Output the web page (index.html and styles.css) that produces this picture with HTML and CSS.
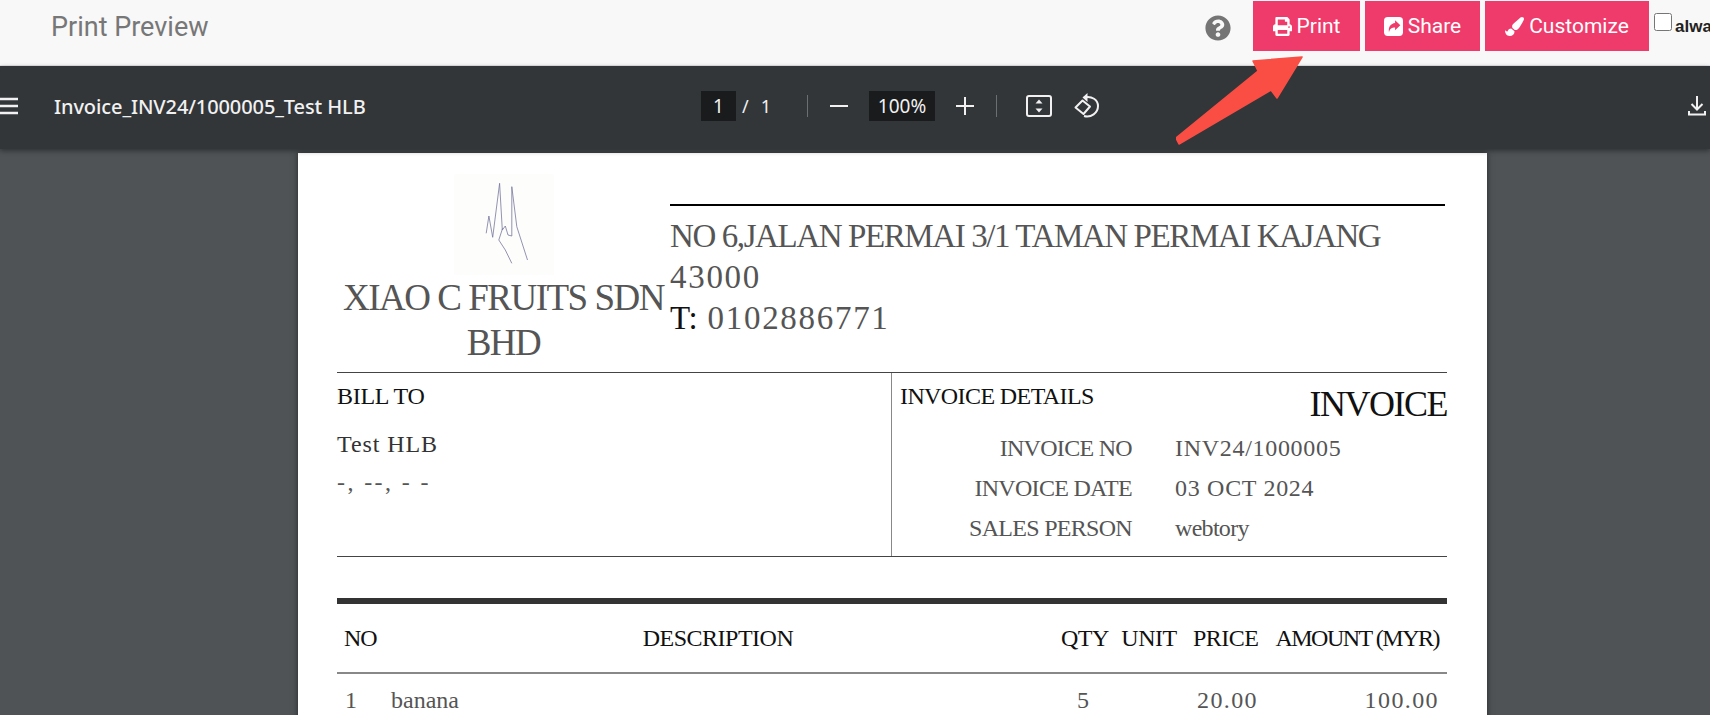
FILE: index.html
```html
<!DOCTYPE html>
<html lang="en">
<head>
    <meta charset="UTF-8">
    <title>Print Preview</title>
    <link rel="stylesheet" href="styles.css">
</head>
<body>
    <header class="topbar">
        <h1 class="topbar-title">Print Preview</h1>
        <svg class="help-icon" viewBox="0 0 512 512"><path d="M504 256c0 136.997-111.043 248-248 248S8 392.997 8 256C8 119.083 119.043 8 256 8s248 111.083 248 248zM262.655 90c-54.497 0-89.255 22.957-116.549 63.758-3.536 5.286-2.353 12.415 2.715 16.258l34.699 26.31c5.205 3.947 12.621 3.008 16.665-2.122 17.864-22.658 30.113-35.797 57.303-35.797 20.429 0 45.698 13.148 45.698 32.958 0 14.976-12.363 22.667-32.534 33.976C247.128 238.528 216 254.941 216 296v4c0 6.627 5.373 12 12 12h56c6.627 0 12-5.373 12-12v-1.333c0-28.462 83.186-29.647 83.186-106.667 0-58.002-60.165-102-116.531-102zM256 338c-25.365 0-46 20.635-46 46 0 25.364 20.635 46 46 46s46-20.636 46-46c0-25.365-20.635-46-46-46z"/></svg>
        <button class="btn btn-print">
            <svg class="btn-icon" viewBox="0 0 512 512"><path d="M448 192V77.25c0-8.49-3.37-16.62-9.37-22.63L393.37 9.37c-6-6-14.14-9.37-22.63-9.37H96C78.33 0 64 14.33 64 32v160c-35.35 0-64 28.65-64 64v112c0 8.84 7.16 16 16 16h48v96c0 17.67 14.33 32 32 32h320c17.67 0 32-14.33 32-32v-96h48c8.84 0 16-7.16 16-16V256c0-35.35-28.65-64-64-64zm-64 256H128v-96h256v96zm0-224H128V64h192v48c0 8.84 7.16 16 16 16h48v96zm48 72c-13.25 0-24-10.75-24-24 0-13.26 10.75-24 24-24s24 10.74 24 24c0 13.25-10.75 24-24 24z"/></svg>
            Print
        </button>
        <button class="btn btn-share">
            <svg class="btn-icon" viewBox="0 0 18 18"><rect width="18" height="18" rx="3.5" fill="#fff"/><path d="M10.5 3l5 4.800-5 4.800V10c-3 0-5 1-5.800 4.500C3.800 9.500 6.500 6.300 10.500 5.800z" fill="#ef3b6c"/></svg>
            Share
        </button>
        <button class="btn btn-customize">
            <svg class="btn-icon" viewBox="0 0 512 512"><path d="M167.02 309.34c-40.12 2.58-76.53 17.86-97.19 72.3-2.35 6.21-8 9.98-14.59 9.98-11.11 0-45.46-27.67-55.25-34.35C0 439.62 37.93 512 128 512c75.86 0 128-43.77 128-120.19 0-3.11-.65-6.08-.97-9.13l-88.01-73.34zM457.89 0c-15.16 0-29.37 6.71-40.21 16.45C213.27 199.05 192 203.34 192 257.09c0 13.7 3.25 26.76 8.73 38.7l63.82 53.18c7.21 1.8 14.64 3.03 22.39 3.03 62.11 0 98.11-45.47 211.16-256.46 7.38-14.35 13.9-29.85 13.9-45.99C512 20.64 486 0 457.89 0z"/></svg>
            Customize
        </button>
        <label class="always"><input type="checkbox" class="always-box"><span class="always-text">always</span></label>
    </header>

    <div class="toolbar">
        <div class="toolbar-left">
            <svg class="menu-icon" viewBox="0 0 18 18"><path d="M-2 2h20M-2 9h20M-2 16h20" stroke="#f1f1f1" stroke-width="2.400" fill="none"/></svg>
            <span class="doc-title">Invoice_INV24/1000005_Test HLB</span>
        </div>
        <div class="toolbar-center">
            <span class="num-box page-box">1</span>
            <span class="page-sep">/</span>
            <span class="page-total">1</span>
            <span class="divider divider-first"></span>
            <svg class="tool-icon zoom-minus" viewBox="0 0 18 18"><path d="M0 9h18" stroke="#f1f1f1" stroke-width="2"/></svg>
            <span class="num-box zoom-box">100%</span>
            <svg class="tool-icon zoom-plus" viewBox="0 0 18 18"><path d="M0 9h18M9 0v18" stroke="#f1f1f1" stroke-width="2"/></svg>
            <span class="divider divider-second"></span>
            <svg class="fit-icon" viewBox="0 0 26 22"><rect x="1" y="1" width="24" height="20" rx="2" fill="none" stroke="#f1f1f1" stroke-width="2"/><path d="M13 4.500l3.500 4h-7zM13 17.500l3.500-4h-7z" fill="#f1f1f1"/></svg>
            <svg class="rotate-icon" viewBox="0 0 27 26"><path d="M9.500 7.500l7.500 6-6.500 7.500-8-6.500z" fill="none" stroke="#f1f1f1" stroke-width="2" stroke-linejoin="round"/><path d="M11 4.500c8-2 14 2.500 14 8.500 0 7-7 12-14 10" fill="none" stroke="#f1f1f1" stroke-width="2"/><path d="M14.500 0v9L9.500 4.500z" fill="#f1f1f1"/></svg>
        </div>
        <svg class="download-icon" viewBox="0 0 18 20"><path d="M9 0v13M3.500 8l5.500 5.500L14.500 8M1 15v3.500h16V15" fill="none" stroke="#f1f1f1" stroke-width="2"/></svg>
    </div>

    <main class="viewer">
        <div class="sheet">
            <div class="sheet-head">
                <div class="company">
                    <svg class="company-logo" viewBox="0 0 100 101">
                        <rect width="100" height="101" fill="#fdfdfb"/>
                        <path d="M32.200 59.300L34.900 42L38.700 63.300L45.600 9.300L48.300 56L51.300 52L54 61L57.800 62L57.800 12.700L62.800 52.700L73.500 86" fill="none" stroke="#77779f" stroke-width=".8"/>
                        <path d="M48.600 54.300L44.800 66L51.300 76L57.800 89.300" fill="none" stroke="#77779f" stroke-width=".8"/>
                    </svg>
                    <div class="company-name">XIAO C FRUITS SDN BHD</div>
                </div>
                <div class="address">
                    <div>NO 6,JALAN PERMAI 3/1 TAMAN PERMAI KAJANG <span class="address-digits">43000</span></div>
                    <div><span class="address-label">T:</span> <span class="address-digits">0102886771</span></div>
                </div>
            </div>

            <div class="info">
                <div class="bill">
                    <div class="info-heading">BILL TO</div>
                    <div class="bill-name">Test HLB</div>
                    <div class="bill-address">-, --, - -</div>
                </div>
                <div class="details">
                    <div class="details-head">
                        <div class="info-heading">INVOICE DETAILS</div>
                        <div class="doc-type">INVOICE</div>
                    </div>
                    <div class="details-grid">
                        <div class="details-label">INVOICE NO</div><div class="details-value">INV24/1000005</div>
                        <div class="details-label">INVOICE DATE</div><div class="details-value">03 OCT 2024</div>
                        <div class="details-label">SALES PERSON</div><div class="details-name">webtory</div>
                    </div>
                </div>
            </div>

            <table class="items">
                <colgroup>
                    <col class="col-no"><col class="col-desc"><col class="col-qty"><col class="col-unit"><col class="col-price"><col class="col-amount">
                </colgroup>
                <thead>
                    <tr>
                        <th class="text-left no-head">NO</th>
                        <th>DESCRIPTION</th>
                        <th>QTY</th>
                        <th>UNIT</th>
                        <th class="text-right">PRICE</th>
                        <th class="text-right amount-head">AMOUNT (MYR)</th>
                    </tr>
                </thead>
                <tbody>
                    <tr>
                        <td class="text-left">1</td>
                        <td class="text-left">banana</td>
                        <td>5</td>
                        <td></td>
                        <td class="text-right money">20.00</td>
                        <td class="text-right money">100.00</td>
                    </tr>
                </tbody>
            </table>
        </div>
    </main>

    <svg class="arrow" viewBox="0 0 130 90"><path d="M126 1L77 5L82 15L0 82L3 88L95 34L101 42z" fill="#fa4e45" stroke="#fa4e45" stroke-width="1.500" stroke-linejoin="round"/></svg>
</body>
</html>
```

FILE: styles.css
```css
html, body {
    margin: 0;
    height: 100%;
    overflow: hidden;
}
body {
    position: relative;
    display: flex;
    flex-direction: column;
    font-family: "Roboto", sans-serif;
}

/* top bar */
.topbar {
    display: flex;
    align-items: flex-start;
    flex: none;
    height: 66px;
    box-sizing: border-box;
    padding-top: 1px;
    background-color: #f8f8f8;
    border-bottom: 1px solid #e4e4e4;
    overflow: hidden;
}
.topbar-title {
    margin: 10px auto 0 51px;
    font-size: 27px;
    line-height: 32px;
    font-weight: 400;
    color: #777;
}
.help-icon {
    width: 26px;
    height: 26px;
    margin: 14px 22px 0 0;
    fill: #757575;
}
.btn {
    display: flex;
    align-items: center;
    justify-content: center;
    gap: 5px;
    height: 50px;
    margin-right: 5px;
    padding: 0;
    border: none;
    background-color: #ef3b6c;
    color: #fff;
    font-family: "Roboto", sans-serif;
    font-size: 21px;
}
.btn-icon {
    width: 19px;
    height: 19px;
    fill: #fff;
}
.btn-print { width: 107px; }
.btn-share { width: 115px; }
.btn-customize { width: 164px; }
.always {
    display: flex;
    align-items: flex-start;
    width: 56px;
    margin-top: 12px;
    font-family: "Liberation Sans", Arial, sans-serif;
    font-size: 17px;
    font-weight: 700;
    color: #222;
    white-space: nowrap;
}
.always-box {
    flex: none;
    width: 18px;
    height: 18px;
    margin: 0 3px 0 0;
}
.always-text { margin-top: 4px; }

/* pdf toolbar */
.toolbar {
    display: flex;
    align-items: center;
    flex: none;
    height: 83px;
    box-sizing: border-box;
    padding-bottom: 3px;
    background-color: #323639;
    box-shadow: 0 2px 5px rgba(0, 0, 0, 0.4);
    color: #f1f1f1;
    position: relative;
}
.toolbar-left {
    display: flex;
    align-items: center;
    width: 701px;
}
.menu-icon {
    width: 18px;
    height: 18px;
}
.doc-title {
    margin-left: 36px;
    font-family: "Noto Sans", sans-serif;
    font-size: 20px;
    font-weight: 500;
    letter-spacing: -0.1px;
}
.toolbar-center {
    display: flex;
    align-items: center;
}
.num-box {
    height: 30px;
    line-height: 30px;
    text-align: center;
    background-color: #191b1c;
    font-family: "Noto Sans", sans-serif;
    font-size: 19px;
}
.page-box { width: 35px; }
.zoom-box { width: 66px; }
.page-sep {
    margin-left: 6px;
    font-family: "Noto Sans", sans-serif;
    font-size: 18px;
}
.page-total {
    margin-left: 12px;
    font-family: "Noto Sans", sans-serif;
    font-size: 18px;
}
.divider {
    width: 1px;
    height: 22px;
    background-color: #6b6f72;
}
.divider-first { margin: 0 22px 0 36px; }
.divider-second { margin: 0 29px 0 22px; }
.tool-icon {
    width: 18px;
    height: 18px;
}
.zoom-minus { margin-right: 21px; }
.zoom-plus { margin-left: 21px; }
.fit-icon {
    width: 26px;
    height: 22px;
}
.rotate-icon {
    width: 27px;
    height: 26px;
    margin-left: 21px;
}
.download-icon {
    width: 18px;
    height: 20px;
    margin-left: auto;
    margin-right: 4px;
}

/* pdf page */
.viewer {
    flex: 1;
    min-height: 0;
    padding-top: 4px;
    background-color: #4f5356;
    overflow: hidden;
}
.sheet {
    width: 1189px;
    height: 700px;
    box-sizing: border-box;
    margin-left: 298px;
    padding: 21px 40px 0 39px;
    background-color: #fff;
    box-shadow: 0 0 6px rgba(0, 0, 0, 0.5);
    font-family: "Liberation Serif", serif;
    color: #555;
}
.sheet-head {
    display: flex;
    align-items: flex-start;
}
.company {
    width: 333px;
    text-align: center;
}
.company-logo {
    display: block;
    width: 100px;
    height: 101px;
    margin: 0 auto;
}
.company-name {
    font-size: 37px;
    line-height: 45px;
    letter-spacing: -1.5px;
    color: #555;
}
.address {
    width: 775px;
    margin-top: 30px;
    padding-top: 10px;
    border-top: 2px solid #000;
    font-size: 33px;
    line-height: 41px;
    letter-spacing: -1.4px;
    color: #555;
}
.address-label {
    margin-right: 3px;
    color: #111;
    letter-spacing: 0;
}
.address-digits { letter-spacing: 1.700px; }

.info {
    display: flex;
    height: 183px;
    margin-top: 7px;
    border-top: 1px solid #444;
    border-bottom: 1px solid #444;
}
.bill {
    width: 555px;
    padding-top: 11px;
    box-sizing: border-box;
    border-right: 1px solid #888;
}
.details {
    flex: 1;
    padding: 11px 0 0 8px;
}
.info-heading {
    font-size: 24px;
    line-height: 24px;
    letter-spacing: -0.6px;
    color: #111;
}
.bill .info-heading { letter-spacing: -0.3px; }
.bill-name {
    margin-top: 22px;
    font-size: 24px;
    line-height: 28px;
    letter-spacing: 0.9px;
    color: #333;
}
.bill-address {
    margin-top: 10px;
    font-size: 24px;
    line-height: 28px;
    letter-spacing: 2.400px;
    color: #555;
}
.details-head {
    display: flex;
    justify-content: space-between;
}
.doc-type {
    margin-top: 5px;
    font-size: 36px;
    line-height: 30px;
    letter-spacing: -1.500px;
    color: #111;
}
.details-grid {
    display: grid;
    grid-template-columns: 232px 1fr;
    column-gap: 43px;
    margin-top: 9px;
    font-size: 24px;
    line-height: 40px;
}
.details-label {
    text-align: right;
    letter-spacing: -0.7px;
}
.details-value { letter-spacing: 0.7px; }
.details-name { letter-spacing: -0.7px; }

.items {
    width: 1110px;
    margin-top: 41px;
    border-collapse: collapse;
    table-layout: fixed;
    border-top: 6px solid #333;
    font-size: 24px;
}
.col-no { width: 46px; }
.col-desc { width: 670px; }
.col-qty { width: 60px; }
.col-unit { width: 72px; }
.col-price { width: 81px; }
.col-amount { width: 181px; }
.items th {
    height: 68px;
    padding: 0 8px;
    font-weight: 400;
    letter-spacing: -0.5px;
    color: #111;
    white-space: nowrap;
    border-bottom: 2px solid #888;
}
.items .no-head {
    padding-left: 7px;
    letter-spacing: -1px;
}
.items .amount-head { letter-spacing: -1.500px; }
.items td {
    height: 52px;
    padding: 0 8px;
    text-align: center;
}
.items .text-left { text-align: left; }
.items .text-right { text-align: right; }
.items .money { letter-spacing: 1.400px; }

/* red arrow drawn over the screenshot */
.arrow {
    position: absolute;
    left: 1176px;
    top: 56px;
    width: 130px;
    height: 90px;
}
```
